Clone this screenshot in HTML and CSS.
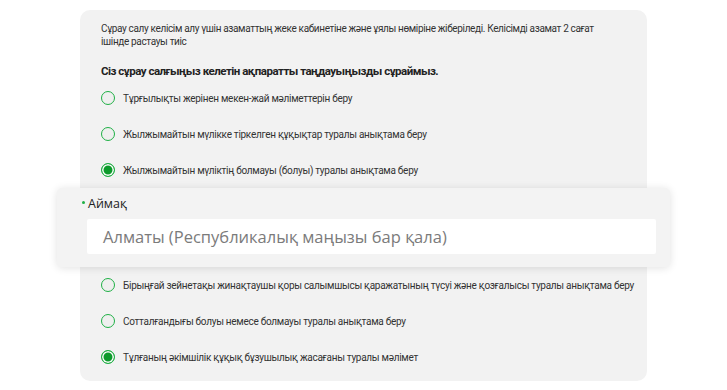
FILE: index.html
```html
<!DOCTYPE html>
<html>
<head>
    <title>Сұрау салу</title>
    <link rel="stylesheet" href="styles.css">
</head>
<body>
    <div class="card">
        <p class="note">Сұрау салу келісім алу үшін азаматтың жеке кабинетіне және ұялы нөміріне жіберіледі. Келісімді азамат 2 сағат<br>ішінде растауы тиіс</p>
        <h3 class="title">Сіз сұрау салғыңыз келетін ақпаратты таңдауыңызды сұраймыз.</h3>

        <!-- Options list -->
        <label class="option"><span class="radio"></span>Тұрғылықты жерінен мекен-жай мәліметтерін беру</label>
        <label class="option"><span class="radio"></span>Жылжымайтын мүлікке тіркелген құқықтар туралы анықтама беру</label>
        <label class="option"><span class="radio checked"></span>Жылжымайтын мүліктің болмауы (болуы) туралы анықтама беру</label>

        <!-- Region field, pops out of the card -->
        <div class="field">
            <div class="field-label"><span class="req"></span>Аймақ</div>
            <div class="field-input">Алматы (Республикалық маңызы бар қала)</div>
        </div>

        <label class="option"><span class="radio"></span>Бірыңғай зейнетақы жинақтаушы қоры салымшысы қаражатының түсуі және қозғалысы туралы анықтама беру</label>
        <label class="option"><span class="radio"></span>Сотталғандығы болуы немесе болмауы туралы анықтама беру</label>
        <label class="option"><span class="radio checked"></span>Тұлғаның әкімшілік құқық бұзушылық жасағаны туралы мәлімет</label>
    </div>
</body>
</html>
```

FILE: styles.css
```css
html, body {
    margin: 0;
    padding: 0;
}

body {
    background: #fff;
    font-family: 'Roboto', sans-serif;
    color: #2b2b2b;
    padding-top: 10px;
}

.card {
    margin-left: 80px;
    width: 567px;
    box-sizing: border-box;
    background: #f2f2f2;
    border-radius: 10px;
    padding: 12px 21px 6px 21px;
}

.note {
    margin: 0;
    font-size: 10px;
    line-height: 13px;
    letter-spacing: -0.35px;
    color: #333;
    white-space: nowrap;
}

.title {
    margin: 14px 0 0 0;
    font-size: 11.5px;
    line-height: 18px;
    letter-spacing: -0.5px;
    font-weight: bold;
    color: #222;
}

.option {
    display: flex;
    align-items: center;
    height: 36px;
    font-size: 10px;
    letter-spacing: -0.28px;
    color: #333;
    white-space: nowrap;
}

.radio {
    width: 14px;
    height: 14px;
    box-sizing: border-box;
    border: 1.5px solid #1fb045;
    border-radius: 50%;
    margin-right: 8px;
    flex-shrink: 0;
    background: #efefef;
}

.radio.checked {
    background: #0c9a2b;
    box-shadow: inset 0 0 0 1.5px #fff;
}

.field {
    margin: 0 -44px;
    height: 79px;
    box-sizing: border-box;
    background: #f3f3f3;
    border-radius: 5px;
    box-shadow: 0 1px 8px rgba(0, 0, 0, 0.12);
    padding: 8px 14px 0 30px;
    font-family: 'Open Sans', sans-serif;
}

.field-label {
    position: relative;
    font-size: 12.5px;
    line-height: 16px;
    color: #222;
    margin-left: 1px;
}

.req {
    position: absolute;
    left: -6px;
    top: 5px;
    width: 3px;
    height: 3px;
    border-radius: 50%;
    background: #1fb045;
}

.field-input {
    margin-top: 7px;
    height: 35px;
    background: #fff;
    border-radius: 2px;
    padding-left: 16px;
    font-size: 16.5px;
    line-height: 35px;
    color: #7b7b7b;
}
```
